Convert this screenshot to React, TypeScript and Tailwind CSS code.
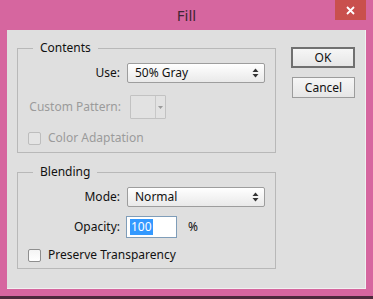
import React from 'react'

const font = { fontFamily: '"Noto Sans", "Open Sans", sans-serif' }

function Arrows() {
  return (
    <svg width="7" height="10" viewBox="0 0 7 10" className="text-[#333]">
      <path d="M3.5 0.5 L6.5 4 L0.5 4 Z" fill="currentColor" />
      <path d="M3.5 9.5 L6.5 6 L0.5 6 Z" fill="currentColor" />
    </svg>
  )
}

function Select({ value }: { value: string }) {
  return (
    <div className="flex h-[20px] w-[138px] items-center justify-between rounded-[2px] border border-[#9d9d9d] bg-gradient-to-b from-white to-[#e9e9e9] pl-[7px] pr-[5px] text-[12px] text-[#111]">
      <span>{value}</span>
      <Arrows />
    </div>
  )
}

function Check({ disabled }: { disabled?: boolean }) {
  return (
    <div
      className={`h-[13px] w-[13px] rounded-[2px] border ${
        disabled ? 'border-[#bdbdbd] bg-[#e4e4e4]' : 'border-[#8e8e8e] bg-gradient-to-b from-[#f4f4f4] to-white'
      }`}
    />
  )
}

export default function App() {
  return (
    <div className="flex h-[299px] w-[373px] flex-col bg-[#d6669f]" style={font}>
      {/* title bar */}
      <div className="relative flex h-[30px] items-center justify-center">
        <span className="text-[15px] text-[#3f2634]">Fill</span>
        <div className="absolute right-[7px] top-0 flex h-[20px] w-[31px] items-center justify-center bg-[#c9504d]">
          <svg width="9" height="9" viewBox="0 0 9 9">
            <path d="M1 1 L8 8 M8 1 L1 8" stroke="white" strokeWidth="1.8" />
          </svg>
        </div>
      </div>

      {/* body */}
      <div className="mx-[7px] flex h-[259px] border-b border-r border-[#f0f0f0] bg-[#dfdfdf] pt-[10px] text-[12px] text-[#111]">
        <div className="ml-[10px] flex w-[259px] flex-col">
          <fieldset className="border border-[#b8b8b8]">
            <legend className="ml-[15px] px-[7px] leading-[16px]">Contents</legend>
            <div className="mt-[7px] flex h-[20px] items-center">
              <span className="w-[102px] text-right">Use:</span>
              <div className="ml-[7px]">
                <Select value="50% Gray" />
              </div>
            </div>
            <div className="mt-[12px] flex h-[24px] items-center">
              <span className="w-[103px] text-right text-[#9b9b9b]">Custom Pattern:</span>
              <div className="ml-[9px] flex h-[24px] w-[36px] rounded-[1px] border border-[#c2c2c2] bg-[#e2e2e2]">
                <div className="flex-1 border-r border-[#c8c8c8]" />
                <div className="flex w-[9px] items-center justify-center">
                  <svg width="5" height="3" viewBox="0 0 5 3">
                    <path d="M0 0 H5 L2.5 3 Z" fill="#9a9a9a" />
                  </svg>
                </div>
              </div>
            </div>
            <div className="mt-[12px] flex h-[14px] items-center pl-[10px]">
              <Check disabled />
              <span className="ml-[7px] text-[#9b9b9b]">Color Adaptation</span>
            </div>
            <div className="h-[7px]" />
          </fieldset>

          <fieldset className="mt-[11px] border border-[#b8b8b8]">
            <legend className="ml-[15px] px-[7px] leading-[16px]">Blending</legend>
            <div className="mt-[7px] flex h-[20px] items-center">
              <span className="w-[102px] text-right">Mode:</span>
              <div className="ml-[7px]">
                <Select value="Normal" />
              </div>
            </div>
            <div className="mt-[9px] flex h-[22px] items-center">
              <span className="w-[102px] text-right">Opacity:</span>
              <div className="ml-[6px] flex h-[22px] w-[51px] items-center border border-[#7f9db9] bg-white pl-[3px]">
                <span className="bg-[#3399ff] px-[1px] leading-[16px] text-white">100</span>
              </div>
              <span className="ml-[11px]">%</span>
            </div>
            <div className="mt-[10px] flex h-[14px] items-center pl-[10px]">
              <Check />
              <span className="ml-[7px]">Preserve Transparency</span>
            </div>
            <div className="h-[6px]" />
          </fieldset>
        </div>

        <div className="ml-[15px] flex w-[64px] flex-col">
          <div className="mt-[7px] flex h-[21px] items-center justify-center border-2 border-[#707070] bg-gradient-to-b from-[#f6f6f6] to-[#e6e6e6]">
            OK
          </div>
          <div className="ml-[1px] mt-[9px] flex h-[21px] items-center justify-center border border-[#9c9c9c] bg-gradient-to-b from-[#f6f6f6] to-[#e6e6e6]">
            Cancel
          </div>
        </div>
      </div>

      <div className="flex-1" />
      <div className="h-[3px] bg-[#4d2a3c]" />
    </div>
  )
}
